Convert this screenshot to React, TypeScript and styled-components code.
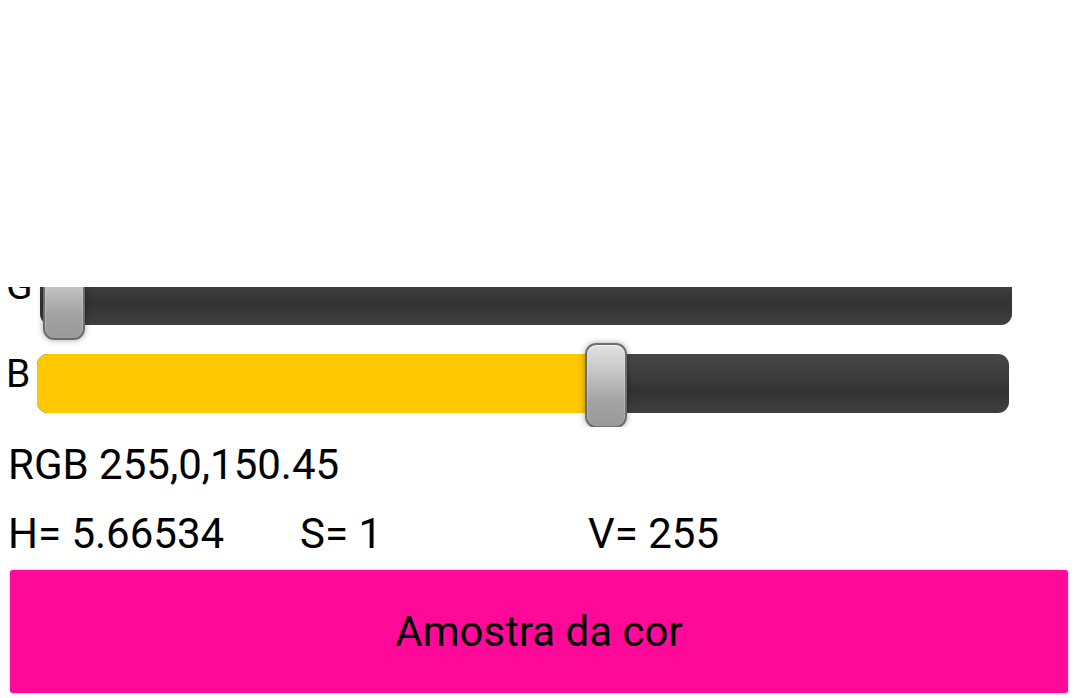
import React from 'react'
import styled, { createGlobalStyle } from 'styled-components'

const GlobalStyle = createGlobalStyle`
  html, body {
    margin: 0;
    padding: 0;
    background: #ffffff;
  }
  body {
    font-family: Roboto, "Noto Sans", "Liberation Sans", sans-serif;
    color: #000;
  }
`

interface Channel {
  label: string;
  value: number;
}

const channels: Channel[] = [
  { label: 'R', value: 255 },
  { label: 'G', value: 0 },
  { label: 'B', value: 150.45 },
]

const TRACK_WIDTH = 972
const THUMB_PAD = 24

const ChannelSlider = ({ channel }: { channel: Channel }) => {
  const ratio = channel.value / 255
  const center = THUMB_PAD + ratio * (TRACK_WIDTH - THUMB_PAD * 2)
  return (
    <SliderRow>
      <SliderLabel>{channel.label}</SliderLabel>
      <Track>
        <Fill style={{ width: `${ratio * TRACK_WIDTH}px` }} />
        <Thumb style={{ left: `${center - 21}px` }} />
      </Track>
    </SliderRow>
  )
}

export default function App() {
  return (
    <Screen>
      <GlobalStyle />
      <TopBlank />
      <SliderViewport>
        {channels.map((c) => (
          <ChannelSlider key={c.label} channel={c} />
        ))}
      </SliderViewport>
      <InfoBlock>
        <InfoText>RGB 255,0,150.45</InfoText>
        <HsvRow>
          <InfoText>H= 5.66534</InfoText>
          <InfoText>S= 1</InfoText>
          <InfoText>V= 255</InfoText>
        </HsvRow>
      </InfoBlock>
      <SampleButton>Amostra da cor</SampleButton>
    </Screen>
  )
}

const Screen = styled.div`
width: 1080px;
height: 698px;
overflow: hidden;
display: flex;
flex-direction: column;
background: #fff;
`
const TopBlank = styled.div`
height: 287px;
flex-shrink: 0;
`
const SliderViewport = styled.div`
height: 140px;
flex-shrink: 0;
overflow: hidden;
display: flex;
flex-direction: column;
justify-content: flex-end;
`
const SliderRow = styled.div`
height: 88px;
flex-shrink: 0;
display: flex;
align-items: center;
padding-left: 6px;
`
const SliderLabel = styled.span`
font-size: 39px;
line-height: 1;
margin-right: 7px;
margin-top: -18px;
`
const Track = styled.div`
position: relative;
width: ${TRACK_WIDTH}px;
height: 59px;
border-radius: 11px;
background: linear-gradient(#474747 0%, #3c3c3c 40%, #323232 62%, #3f3f3f 100%);
`
const Fill = styled.div`
height: 100%;
border-radius: 11px 0 0 11px;
background: #ffc800;
`
const Thumb = styled.div`
position: absolute;
top: -11px;
width: 38px;
height: 81px;
border: 2px solid #6d6d6d;
border-radius: 11px;
background: linear-gradient(#e2e2e2 0%, #c4c4c4 35%, #a2a2a2 70%, #9a9a9a 100%);
box-shadow: 0 0 6px rgba(0, 0, 0, 0.35), inset 0 1px 2px rgba(255, 255, 255, 0.7);
`
const InfoBlock = styled.div`
padding: 13px 0 0 8px;
display: flex;
flex-direction: column;
gap: 20px;
`
const InfoText = styled.div`
font-size: 42px;
line-height: 49px;
white-space: nowrap;
`
const HsvRow = styled.div`
display: grid;
grid-template-columns: 292px 288px auto;
`
const SampleButton = styled.button`
margin: 12px 0 0 10px;
width: 1058px;
height: 123px;
border: none;
border-radius: 3px;
background: #ff0a98;
box-shadow: 0 0 2px rgba(255, 10, 152, 0.6);
font-family: Roboto, "Noto Sans", "Liberation Sans", sans-serif;
font-size: 42px;
color: #000;
flex-shrink: 0;
`
